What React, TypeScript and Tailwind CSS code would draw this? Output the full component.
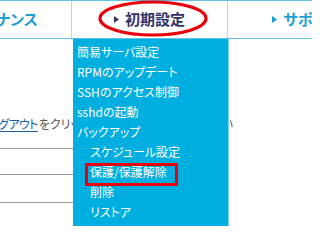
import React from "react";

const jp = { fontFamily: '"Noto Sans CJK JP", "Noto Sans", sans-serif' };

const Arrow = ({ color }: { color: string }) => (
  <svg width="5" height="7" viewBox="0 0 5 7" className="mr-[6px] shrink-0">
    <path d="M0 0 L5 3.5 L0 7 Z" fill={color} />
  </svg>
);

const tabs = [
  { label: "メンテナンス", color: "#1b9fd3", arrow: false },
  { label: "初期設定", color: "#33336b", arrow: true },
  { label: "サポート", color: "#1b9fd3", arrow: true },
];

const items = [
  { label: "簡易サーバ設定", sub: false },
  { label: "RPMのアップデート", sub: false },
  { label: "SSHのアクセス制御", sub: false },
  { label: "sshdの起動", sub: false },
  { label: "バックアップ", sub: false },
  { label: "スケジュール設定", sub: true },
  { label: "保護/保護解除", sub: true, marked: true },
  { label: "削除", sub: true },
  { label: "リストア", sub: true },
];

export default function App() {
  return (
    <div
      className="relative h-[226px] w-[312px] overflow-hidden bg-white [font-feature-settings:'palt']"
      style={jp}
    >
      {/* tab bar */}
      <div className="flex h-[39px] border-y border-[#5fc2e6] ml-[-84px] w-max">
        {tabs.map((t, i) => (
          <div
            key={t.label}
            className={`flex w-[156px] items-center justify-center text-[15px] font-bold ${
              i < 2 ? "border-r border-[#a9dcee]" : ""
            }`}
            style={{ color: t.color }}
          >
            {t.arrow && <Arrow color={t.color} />}
            <span className={i === 0 ? "ml-[6px]" : ""}>{t.label}</span>
          </div>
        ))}
      </div>

      {/* red ellipse annotation */}
      <svg className="absolute left-[97px] top-0" width="112" height="38" viewBox="0 0 112 38">
        <ellipse cx="56" cy="18.5" rx="53" ry="16.5" fill="none" stroke="#e8000b" strokeWidth="3.2" />
      </svg>

      {/* page body behind the menu */}
      <div className="pt-[75px] text-[12px]">
        <p className="flex h-[20px] items-center whitespace-nowrap text-[#555]">
          <span className="ml-[-13px] shrink-0 tracking-[-0.6px] text-[#1a5ea8] underline underline-offset-2">
            ログアウト
          </span>
          <span className="ml-[1px] w-[183px] shrink-0 overflow-hidden">をクリックして画面を閉じてくださ</span>
          <span className="shrink-0">い</span>
        </p>
        <div className="mt-[14px] h-px w-[150px] bg-[#9a9a9a]" />
        <div className="mt-[25px] h-px w-[150px] bg-[#9a9a9a]" />
        <div className="mt-[27px] h-px w-[150px] bg-[#9a9a9a]" />
      </div>

      {/* dropdown menu */}
      <div className="absolute left-[73px] top-[39px] h-[190px] w-[156px] border-r border-[#7fd3ee] bg-[#00aee0] pt-[3px]">
        {items.map((it) => (
          <div
            key={it.label}
            className={`relative h-[20px] whitespace-nowrap text-[12px] leading-[20px] text-white ${
              it.sub ? "pl-[17px]" : "pl-[4px]"
            }`}
          >
            {it.label}
            {it.marked && (
              <div className="absolute left-[12px] top-px h-[23px] w-[93px] border-[3px] border-[#e8000b]" />
            )}
          </div>
        ))}
      </div>
    </div>
  );
}
